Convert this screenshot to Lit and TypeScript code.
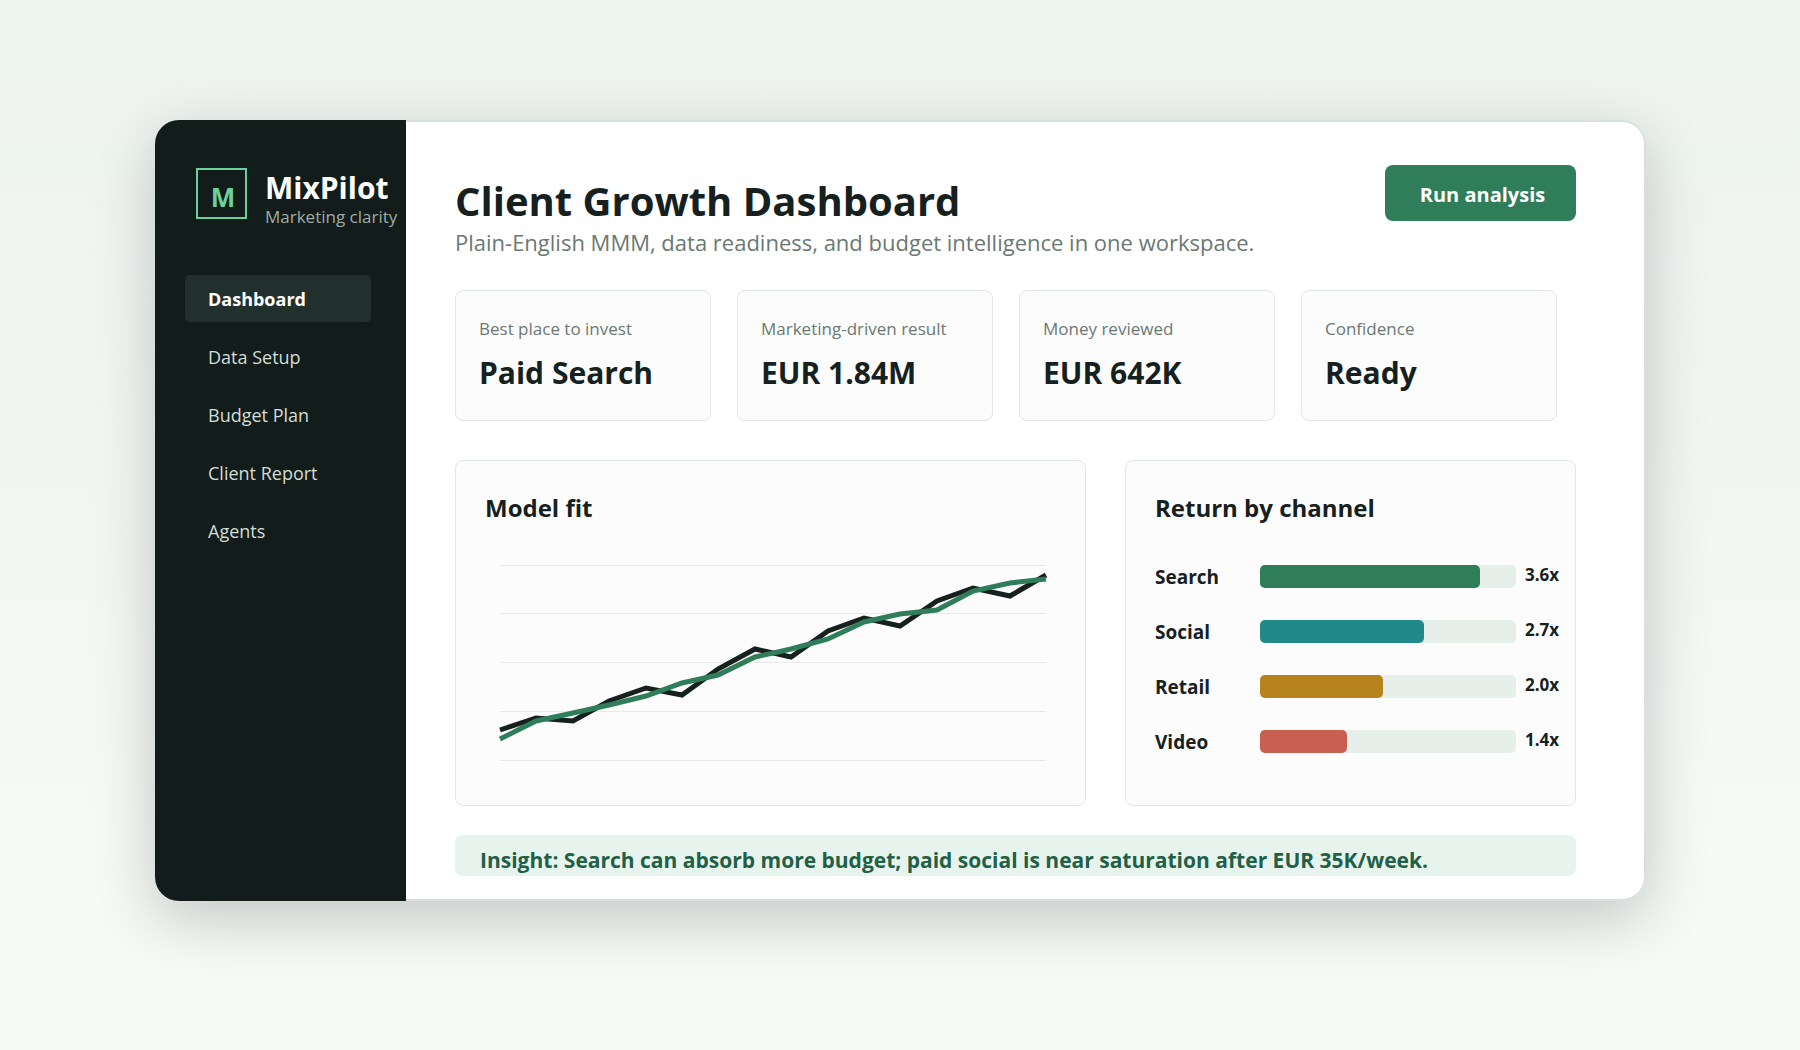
import { LitElement, html, svg, css } from "lit";
import { customElement, state } from "lit/decorators.js";
import { classMap } from "lit/directives/class-map.js";

const NAV = ["Dashboard", "Data Setup", "Budget Plan", "Client Report", "Agents"];

const METRICS = [
  { label: "Best place to invest", value: "Paid Search" },
  { label: "Marketing-driven result", value: "EUR 1.84M" },
  { label: "Money reviewed", value: "EUR 642K" },
  { label: "Confidence", value: "Ready" },
];

const CHANNELS = [
  { name: "Search", value: "3.6x", share: 86, tone: "green" },
  { name: "Social", value: "2.7x", share: 64, tone: "teal" },
  { name: "Retail", value: "2.0x", share: 48, tone: "amber" },
  { name: "Video", value: "1.4x", share: 34, tone: "red" },
];

// Series heights, measured down from the top grid line of the chart.
const CHART_WIDTH = 546;
const CHART_HEIGHT = 196;
const ACTUAL = [165, 153, 156, 136, 123, 130, 104, 84, 92, 66, 53, 61, 36, 23, 31, 10];
const MODEL = [174, 156, 148, 140, 131, 118, 110, 92, 84, 74, 57, 49, 45, 26, 18, 14];
const GRID = [0, 48, 97, 146, 195];

const toPoints = (series: number[]) =>
  series.map((y, i) => `${Math.round((i * CHART_WIDTH) / (series.length - 1))},${y}`).join(" ");

@customElement("fit-chart")
export class FitChart extends LitElement {
  static styles = css`
    :host { display: block; }
    .plot { display: block; width: 100%; height: 196px; overflow: visible; }
    .grid { fill: #e6ebe8; }
    .line { fill: none; stroke-width: 5; vector-effect: non-scaling-stroke; }
    .actual { stroke: #16211f; }
    .model { stroke: #2f7d59; }
  `;

  render() {
    return html`
      <svg class="plot" viewBox="0 0 ${CHART_WIDTH} ${CHART_HEIGHT}" preserveAspectRatio="none"
        role="img" aria-label="Model fit">
        ${GRID.map((y) => svg`<rect class="grid" x="0" y=${y} width=${CHART_WIDTH} height="1"></rect>`)}
        <polyline class="line actual" points=${toPoints(ACTUAL)}></polyline>
        <polyline class="line model" points=${toPoints(MODEL)}></polyline>
      </svg>
    `;
  }
}

@customElement("app-root")
export class AppRoot extends LitElement {
  @state() private active = "Dashboard";

  static styles = css`
    :host {
      display: block;
      font-family: "Open Sans", "Noto Sans", sans-serif;
      color: #16211f;
    }
    * { box-sizing: border-box; }
    h1, h2, p, ul { margin: 0; padding: 0; }
    ul { list-style: none; }
    .page {
      min-height: 100vh;
      padding: 120px 154px 149px 155px;
      background: linear-gradient(#edf3ef, #f8faf7);
    }
    .window {
      display: flex;
      border-radius: 24px;
      box-shadow: 0 18px 60px rgba(16, 26, 24, 0.22);
    }
    .sidebar {
      flex: 0 0 251px;
      padding-top: 48px;
      border-radius: 24px 0 0 24px;
      background: #121c1a;
    }
    .brand { display: flex; gap: 18px; padding-left: 41px; }
    .logo {
      flex: none;
      width: 51px;
      height: 51px;
      padding: 7px 0 0 3px;
      border: 2px solid #6bd19c;
      color: #6bd19c;
      font-size: 26px;
      font-weight: 700;
      line-height: 40px;
      text-align: center;
    }
    .name { color: #fff; font-size: 30px; font-weight: 700; line-height: 40px; white-space: nowrap; }
    .tagline { color: #9faca6; font-size: 17px; line-height: 18px; white-space: nowrap; }
    .nav { display: grid; gap: 11px; margin: 49px 35px 0 30px; }
    .link {
      display: block;
      height: 47px;
      padding-left: 23px;
      border-radius: 5px;
      color: #d3dcd7;
      font-size: 18px;
      line-height: 49px;
      text-decoration: none;
    }
    .current { background: #22302d; color: #fff; font-weight: 700; }
    .main {
      flex: 1;
      min-width: 0;
      padding: 43px 68px 23px 49px;
      border: 2px solid #d9e0dc;
      border-left: 0;
      border-radius: 0 24px 24px 0;
      background: #fff;
    }
    .header { display: flex; justify-content: space-between; align-items: flex-start; }
    .heading { padding-top: 10px; }
    .title { font-size: 40px; font-weight: 700; line-height: 52px; }
    .subtitle { color: #6b7873; font-size: 22px; line-height: 30px; }
    .run {
      width: 191px;
      height: 56px;
      padding: 3px 0 0 4px;
      border: 0;
      border-radius: 8px;
      background: #2f7d59;
      color: #fff;
      font: 700 20px/28px "Open Sans", "Noto Sans", sans-serif;
      cursor: pointer;
    }
    .metrics { display: grid; grid-template-columns: repeat(4, 1fr); gap: 26px; margin: 33px 19px 0 0; }
    .card { border: 1px solid #e2e7e4; border-radius: 8px; background: #fcfcfc; }
    .metric { display: grid; gap: 12px; padding: 26px 23px 27px; }
    .label { color: #6b7873; font-size: 17px; line-height: 24px; }
    .value { font-size: 30px; font-weight: 700; line-height: 40px; }
    .panels { display: grid; grid-template-columns: 631fr 451fr; gap: 39px; margin-top: 39px; }
    .panel { padding: 31px 14px 44px 29px; }
    .panel-title { margin-bottom: 41px; font-size: 24px; font-weight: 700; line-height: 32px; }
    .chart { margin: 0 25px 0 15px; }
    .channels { display: grid; gap: 32px; }
    .channel {
      display: grid;
      grid-template-columns: 105px 1fr 45px;
      align-items: start;
      height: 23px;
    }
    .channel-name { font-size: 19px; font-weight: 700; line-height: 25px; }
    .track { border-radius: 5px; background: #e7efea; }
    .fill { height: 23px; border-radius: 5px; }
    .green { background: #2f7d59; }
    .teal { background: #1f8a89; }
    .amber { background: #b7831c; }
    .red { background: #c95f50; }
    .multiple { padding-left: 9px; font-size: 17px; font-weight: 700; line-height: 20px; }
    .insight {
      margin-top: 29px;
      padding: 9px 25px 0;
      border-radius: 8px;
      background: #e7f4ed;
      color: #1f6046;
      font-size: 21px;
      font-weight: 700;
      line-height: 32px;
    }
  `;

  private select(event: Event, item: string) {
    event.preventDefault();
    this.active = item;
  }

  render() {
    return html`
      <div class="page">
        <div class="window">
          <aside class="sidebar">
            <div class="brand">
              <div class="logo">M</div>
              <div>
                <div class="name">MixPilot</div>
                <div class="tagline">Marketing clarity</div>
              </div>
            </div>
            <nav class="nav">
              ${NAV.map(
                (item) => html`<a href="#" @click=${(e: Event) => this.select(e, item)}
                  class=${classMap({ link: true, current: item === this.active })}>${item}</a>`
              )}
            </nav>
          </aside>
          <main class="main">
            <header class="header">
              <div class="heading">
                <h1 class="title">Client Growth Dashboard</h1>
                <p class="subtitle">Plain-English MMM, data readiness, and budget intelligence in one workspace.</p>
              </div>
              <button class="run" type="button">Run analysis</button>
            </header>
            <section class="metrics">
              ${METRICS.map(
                (m) => html`<div class="card metric">
                  <div class="label">${m.label}</div>
                  <div class="value">${m.value}</div>
                </div>`
              )}
            </section>
            <section class="panels">
              <div class="card panel">
                <h2 class="panel-title">Model fit</h2>
                <fit-chart class="chart"></fit-chart>
              </div>
              <div class="card panel">
                <h2 class="panel-title">Return by channel</h2>
                <ul class="channels">
                  ${CHANNELS.map(
                    (c) => html`<li class="channel">
                      <span class="channel-name">${c.name}</span>
                      <div class="track"><div class="fill ${c.tone}" style="width:${c.share}%"></div></div>
                      <span class="multiple">${c.value}</span>
                    </li>`
                  )}
                </ul>
              </div>
            </section>
            <p class="insight">Insight: Search can absorb more budget; paid social is near saturation after EUR 35K/week.</p>
          </main>
        </div>
      </div>
    `;
  }
}
